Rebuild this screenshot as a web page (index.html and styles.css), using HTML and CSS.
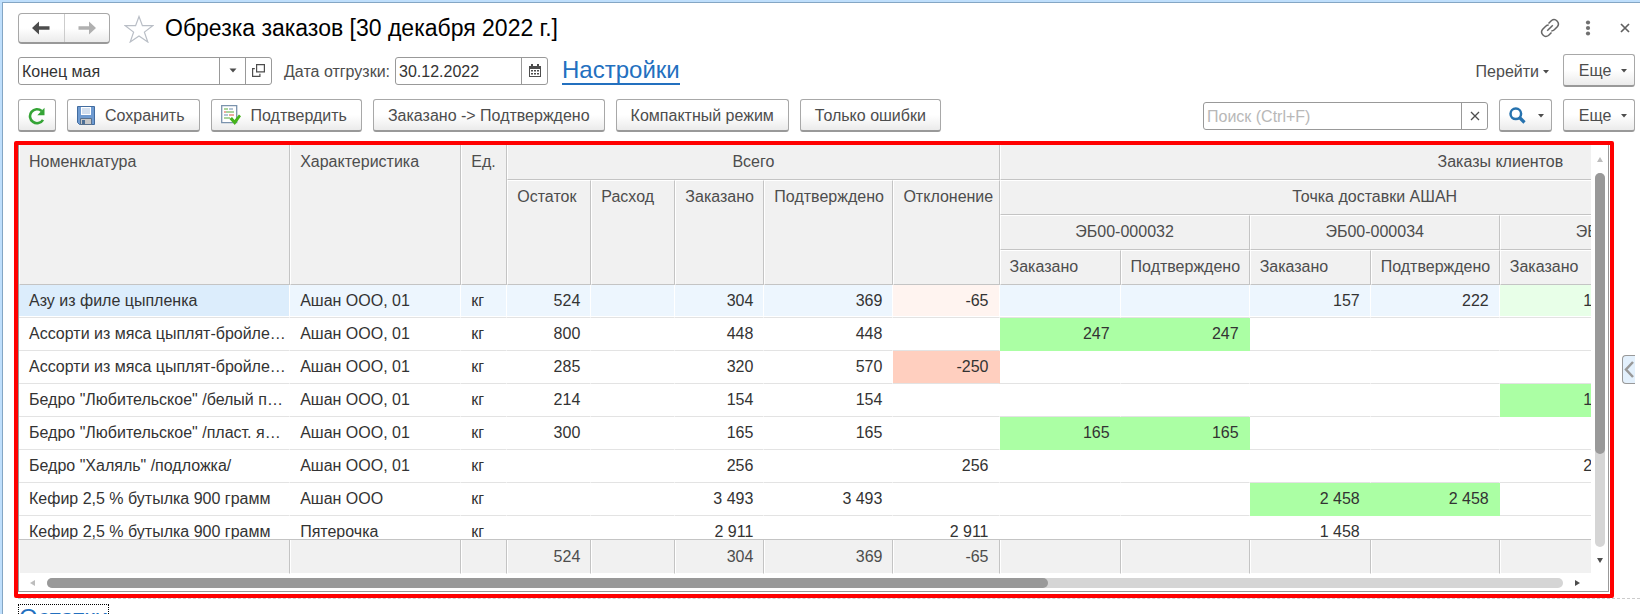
FILE: index.html
```html
<!DOCTYPE html>
<html lang="ru">
<head>
<meta charset="utf-8">
<title>Обрезка заказов</title>
<link rel="stylesheet" href="styles.css">
</head>
<body>
<div class="window">
  <header class="titlebar">
    <div class="history">
      <button class="history-btn" type="button" aria-label="Назад"><svg width="18" height="14" viewBox="0 0 18 14"><path d="M0 7l7-6.500v4.700h10.500v3.600H7v4.700z" fill="#4d4d4d"/></svg></button>
      <button class="history-btn" type="button" aria-label="Вперед"><svg width="18" height="14" viewBox="0 0 18 14"><path d="M18 7l-7-6.500v4.700H.500v3.600H11v4.700z" fill="#b0b0b0"/></svg></button>
    </div>
    <button class="plain star" type="button" aria-label="В избранное"><svg width="30" height="28" viewBox="0 0 30 28"><path d="M15 1.500l3.400 9.200h10.300l-8.300 6.400 3.400 9.900-8.800-6-8.800 6 3.400-9.900-8.300-6.400h10.300z" fill="none" stroke="#b9bec6" stroke-width="1.200"/></svg></button>
    <h1 class="title">Обрезка заказов [30 декабря 2022 г.]</h1>
    <div class="window-tools">
      <button class="plain" type="button" aria-label="Ссылка"><svg width="20" height="20" viewBox="0 0 20 20" fill="none" stroke="#666" stroke-width="1.500"><path d="M8.500 5.500l3-3a4.300 4.300 0 0 1 6 6l-3.200 3.200a4.300 4.300 0 0 1-3 1.200M11.500 14.500l-3 3a4.300 4.300 0 0 1-6-6l3.200-3.200a4.300 4.300 0 0 1 3-1.200M7.200 12.800l5.600-5.600"/></svg></button>
      <button class="plain" type="button" aria-label="Меню"><svg width="6" height="16" viewBox="0 0 6 16" fill="#707070"><circle cx="3" cy="2.500" r="2.100"/><circle cx="3" cy="8" r="2.100"/><circle cx="3" cy="13.500" r="2.100"/></svg></button>
      <button class="plain" type="button" aria-label="Закрыть"><svg width="10" height="10" viewBox="0 0 10 10"><path d="M1 1l8 8M9 1l-8 8" stroke="#606060" stroke-width="1.700"/></svg></button>
    </div>
  </header>

  <div class="params">
    <div class="field field-preset">
      <input type="text" value="Конец мая" aria-label="Настройка">
      <button type="button" aria-label="Выбрать"><svg width="8" height="5" viewBox="0 0 8 5"><path d="M.500.500h7L4 4.500z" fill="#4d4d4d"/></svg></button>
      <button type="button" aria-label="Открыть"><svg width="13" height="13" viewBox="0 0 13 13" fill="none" stroke="#4d4d4d" stroke-width="1.200"><path d="M4.600.600h7.800v7.300H4.600zM2.800 4.600H.600v7.800h7.300V9.800"/></svg></button>
    </div>
    <label class="caption" for="ship-date">Дата отгрузки:</label>
    <div class="field field-date">
      <input id="ship-date" type="text" value="30.12.2022">
      <button type="button" aria-label="Календарь"><svg width="12" height="13" viewBox="0 0 12 13"><path d="M0 2h12v11H0z" fill="#4d4d4d"/><path d="M2 0h2v3H2zM8 0h2v3H8z" fill="#4d4d4d"/><path d="M1 5h10v7H1z" fill="#fff"/><path d="M2 6h2v1.500H2zM5 6h2v1.500H5zM8 6h2v1.500H8zM2 9h2v1.500H2zM5 9h2v1.500H5zM8 9h2v1.500H8z" fill="#4d4d4d"/></svg></button>
    </div>
    <a class="big-link" href="#settings">Настройки</a>
    <button class="plain goto" type="button">Перейти <svg width="6" height="4" viewBox="0 0 6 4"><path d="M0 0h6L3 3.500z" fill="#4d4d4d"/></svg></button>
    <button class="btn btn-more" type="button">Еще <svg width="6" height="4" viewBox="0 0 6 4"><path d="M0 0h6L3 3.500z" fill="#4d4d4d"/></svg></button>
  </div>

  <div class="commands">
    <button class="btn btn-icon" type="button" aria-label="Обновить"><svg width="18" height="18" viewBox="0 0 18 18"><path d="M15 12.800A7 7 0 1 1 13.700 4" fill="none" stroke="#35a436" stroke-width="2.600"/><path d="M16.500.800v7.400H9.300z" fill="#35a436"/></svg></button>
    <button class="btn btn-pic" type="button"><svg width="18" height="19" viewBox="0 0 18 19"><path d="M.500.500h17v18H2.500l-2-2z" fill="#6f9bd1" stroke="#426c9f"/><path d="M4 1h10v8H4z" fill="#fff"/><path d="M5 3h8M5 5h8M5 7h8" stroke="#a7c0df"/><path d="M3.500 12.500h11v6h-11z" fill="#c8c8c8" stroke="#59718d"/><path d="M5 14h3v4H5z" fill="#4d6f96"/></svg>Сохранить</button>
    <button class="btn btn-pic" type="button"><svg width="20" height="21" viewBox="0 0 20 21"><path d="M.700.700h15v17h-15z" fill="#fff" stroke="#7b93ad" stroke-width="1.300"/><path d="M3 4h4M5 7h8M3 13h6" stroke="#56a83b"/><path d="M8 4h4M3 10h4" stroke="#6c8cab"/><path d="M3 7h2M8 10h5" stroke="#e0523f"/><path d="M8.500 14l2.500-2 2.500 3L18 9.500l2 1.800-6.200 8.700z" fill="#46b31c"/></svg>Подтвердить</button>
    <button class="btn" type="button">Заказано -&gt; Подтверждено</button>
    <button class="btn" type="button">Компактный режим</button>
    <button class="btn" type="button">Только ошибки</button>
    <div class="field field-search">
      <input type="text" placeholder="Поиск (Ctrl+F)" aria-label="Поиск">
      <button type="button" aria-label="Очистить"><svg width="10" height="10" viewBox="0 0 10 10"><path d="M1 1l8 8M9 1l-8 8" stroke="#4d4d4d" stroke-width="1.300"/></svg></button>
    </div>
    <button class="btn btn-find" type="button" aria-label="Найти"><svg width="17" height="17" viewBox="0 0 17 17" fill="none" stroke="#2672ae"><circle cx="6.800" cy="6.800" r="5.300" stroke-width="2.500"/><path d="M10.500 10.500l5 5" stroke-width="3.200"/></svg><svg width="6" height="4" viewBox="0 0 6 4"><path d="M0 0h6L3 3.500z" fill="#4d4d4d"/></svg></button>
    <button class="btn btn-more" type="button">Еще <svg width="6" height="4" viewBox="0 0 6 4"><path d="M0 0h6L3 3.500z" fill="#4d4d4d"/></svg></button>
  </div>

  <div class="work">
    <div class="highlight">
      <div class="grid-frame">
        <div class="grid-main">
          <div class="rows">
            <table class="grid">
              <colgroup><col class="w-name"><col class="w-char"><col class="w-unit"><col class="w-rest"><col class="w-rest"><col class="w-total"><col class="w-conf"><col class="w-diff"><col class="w-ord"><col class="w-conf"><col class="w-ord"><col class="w-conf"><col class="w-ord"><col class="w-conf"></colgroup>
              <thead>
                <tr><th rowspan="4">Номенклатура</th><th rowspan="4">Характеристика</th><th rowspan="4">Ед.</th><th class="mid" colspan="5">Всего</th><th class="clients" colspan="6">Заказы клиентов</th></tr>
                <tr><th rowspan="3">Остаток</th><th rowspan="3">Расход</th><th rowspan="3">Заказано</th><th rowspan="3">Подтверждено</th><th rowspan="3">Отклонение</th><th class="mid" colspan="6">Точка доставки АШАН</th></tr>
                <tr><th class="mid" colspan="2">ЭБ00-000032</th><th class="mid" colspan="2">ЭБ00-000034</th><th class="mid" colspan="2">ЭБ00-000035</th></tr>
                <tr><th>Заказано</th><th>Подтверждено</th><th>Заказано</th><th>Подтверждено</th><th>Заказано</th><th>Подтверждено</th></tr>
              </thead>
              <tbody>
                <tr class="current"><td class="active">Азу из филе цыпленка</td><td>Ашан ООО, 01</td><td>кг</td><td>524</td><td></td><td>304</td><td>369</td><td class="warn">-65</td><td></td><td></td><td>157</td><td>222</td><td class="ok">147</td><td class="ok"></td></tr>
                <tr><td>Ассорти из мяса цыплят-бройлеров</td><td>Ашан ООО, 01</td><td>кг</td><td>800</td><td></td><td>448</td><td>448</td><td></td><td class="ok">247</td><td class="ok">247</td><td></td><td></td><td></td><td></td></tr>
                <tr><td>Ассорти из мяса цыплят-бройлеров</td><td>Ашан ООО, 01</td><td>кг</td><td>285</td><td></td><td>320</td><td>570</td><td class="warn">-250</td><td></td><td></td><td></td><td></td><td></td><td></td></tr>
                <tr><td>Бедро "Любительское" /белый поднос/</td><td>Ашан ООО, 01</td><td>кг</td><td>214</td><td></td><td>154</td><td>154</td><td></td><td></td><td></td><td></td><td></td><td class="ok">154</td><td class="ok"></td></tr>
                <tr><td>Бедро "Любительское" /пласт. ящик/</td><td>Ашан ООО, 01</td><td>кг</td><td>300</td><td></td><td>165</td><td>165</td><td></td><td class="ok">165</td><td class="ok">165</td><td></td><td></td><td></td><td></td></tr>
                <tr><td>Бедро "Халяль" /подложка/</td><td>Ашан ООО, 01</td><td>кг</td><td></td><td></td><td>256</td><td></td><td>256</td><td></td><td></td><td></td><td></td><td>256</td><td></td></tr>
                <tr><td>Кефир 2,5 % бутылка 900 грамм</td><td>Ашан ООО</td><td>кг</td><td></td><td></td><td>3 493</td><td>3 493</td><td></td><td></td><td></td><td class="ok">2 458</td><td class="ok">2 458</td><td></td><td></td></tr>
                <tr><td>Кефир 2,5 % бутылка 900 грамм</td><td>Пятерочка</td><td>кг</td><td></td><td></td><td>2 911</td><td></td><td>2 911</td><td></td><td></td><td>1 458</td><td></td><td></td><td></td></tr>
              </tbody>
            </table>
          </div>
          <div class="totals">
            <table class="grid">
              <colgroup><col class="w-name"><col class="w-char"><col class="w-unit"><col class="w-rest"><col class="w-rest"><col class="w-total"><col class="w-conf"><col class="w-diff"><col class="w-ord"><col class="w-conf"><col class="w-ord"><col class="w-conf"><col class="w-ord"><col class="w-conf"></colgroup>
              <tfoot><tr><td></td><td></td><td></td><td>524</td><td></td><td>304</td><td>369</td><td>-65</td><td></td><td></td><td></td><td></td><td></td><td></td></tr></tfoot>
            </table>
          </div>
        </div>
        <div class="vscroll">
          <svg width="6" height="5" viewBox="0 0 6 5"><path d="M3 0l3 5H0z" fill="#bdbdbd"/></svg>
          <div class="track"><div class="thumb"></div></div>
          <svg width="6" height="5" viewBox="0 0 6 5"><path d="M3 5l3-5H0z" fill="#4d4d4d"/></svg>
        </div>
        <div class="hscroll">
          <svg width="5" height="6" viewBox="0 0 5 6"><path d="M0 3l5-3v6z" fill="#bdbdbd"/></svg>
          <div class="track"><div class="thumb"></div></div>
          <svg width="5" height="6" viewBox="0 0 5 6"><path d="M5 3L0 0v6z" fill="#4d4d4d"/></svg>
        </div>
      </div>
    </div>
    <button class="side-tab" type="button" aria-label="Развернуть"><svg width="10" height="17" viewBox="0 0 10 17"><path d="M9 1L2 8.500 9 16" fill="none" stroke="#999" stroke-width="2.500"/></svg></button>
  </div>
  <div class="below"><a class="big-link focused" href="#rest">Остатки</a></div>
</div>
</body>
</html>
```
FILE: styles.css
```css
* { box-sizing: border-box; }

html, body { height: 100%; }

body {
  margin: 0;
  overflow: hidden;
  background: #fff;
  color: #4d4d4d;
  font: 16px/20px "Liberation Sans", Arial, sans-serif;
}

.window {
  min-height: 100%;
  padding: 10px 5px 0 15px;
  border-top: 1px solid #84a6c4;
  border-left: 1px solid #84a6c4;
  box-shadow: 0 0 0 2px #bfdffc;
  margin: 2px 0 0 2px;
}

button, input { font: inherit; color: inherit; }
button { padding: 0; cursor: pointer; }
svg { display: block; flex: none; }

.plain { border: 0; background: none; display: flex; align-items: center; }

.titlebar { display: flex; align-items: center; height: 31px; }

.history {
  display: flex;
  width: 92px;
  height: 31px;
  border: 1px solid #a8a8a8;
  border-bottom: 2px solid #999;
  border-radius: 4px;
  background: linear-gradient(#fff 50%, #ebebeb);
}
.history-btn {
  flex: 1;
  display: flex;
  align-items: center;
  justify-content: center;
  border: 0;
  background: none;
}
.history-btn + .history-btn { border-left: 1px solid #ccc; }

.star { margin-left: 14px; }

.title {
  margin: 0 0 2px 11px;
  color: #000;
  font-size: 23px;
  line-height: 28px;
  font-weight: 400;
}

.window-tools { display: flex; align-items: center; gap: 25px; margin: 0 5px 2px auto; }
.window-tools .plain:last-child { margin-left: 4px; }

.params, .commands { display: flex; align-items: center; height: 33px; }
.params { margin-top: 10px; }
.commands { margin-top: 12px; gap: 11px; }

.field {
  display: flex;
  height: 28px;
  border: 1px solid #999;
  border-radius: 3px;
  background: #fff;
}
.field input {
  flex: 1;
  min-width: 0;
  padding: 2px 3px 0;
  border: 0;
  outline: 0;
  background: none;
  color: #333;
}
.field input::placeholder { color: #b8b8b8; opacity: 1; }
.field button {
  display: flex;
  align-items: center;
  justify-content: center;
  width: 26px;
  border: 0;
  border-left: 1px solid #999;
  background: none;
}
.field-preset { width: 254px; }
.field-date { width: 153px; }
.field-search { width: 285px; margin-left: auto; }

.caption { margin: 0 5px 0 12px; padding-top: 2px; }

.big-link { color: #2370bf; font-size: 24px; line-height: 26px; text-decoration: none; }
.params .big-link { margin-left: 14px; border-bottom: 2px solid #2370bf; }

.goto { gap: 4px; margin-left: auto; padding-top: 2px; }
.params .btn-more { margin-left: 14px; }

.btn {
  display: flex;
  align-items: center;
  justify-content: center;
  height: 33px;
  padding: 1px 14px 0;
  border: 1px solid #a8a8a8;
  border-bottom: 2px solid #999;
  border-radius: 3px;
  background: linear-gradient(#fff 50%, #ebebeb);
  white-space: nowrap;
}
.btn-icon { width: 38px; padding: 1px 0 0; }
.btn-pic { gap: 10px; padding: 1px 14px 0 9px; }
.btn-more { width: 72px; gap: 10px; padding: 1px 8px 0 16px; }
.btn-find { width: 53px; gap: 12px; padding: 1px 8px 0 10px; }

.work { display: flex; align-items: center; justify-content: space-between; margin: 9px 0 0 -4px; }

.highlight {
  flex: 1;
  min-width: 0;
  border: 4px solid #f00;
  border-radius: 2px;
}

.grid-frame {
  display: grid;
  grid-template-columns: minmax(0, 1fr) 17px;
  margin: 0 1px 2px 0;
  border: 1px solid #999;
  border-top: 0;
}

.grid-main { min-width: 0; }
.rows { height: 394px; overflow: hidden; }
.totals { overflow: hidden; border-top: 1px solid #c4c4c4; }

.grid {
  width: 1731px;
  min-width: 100%;
  table-layout: fixed;
  border-collapse: separate;
  border-spacing: 0;
}
.w-name { width: 271px; }
.w-char { width: 171px; }
.w-unit { width: 46px; }
.w-rest { width: 84px; }
.w-total { width: 89px; }
.w-conf { width: 129px; }
.w-diff { width: 106px; }
.w-ord { width: 121px; }

.grid th {
  height: 35px;
  padding: 6px 0 7px 9px;
  border: 1px solid #fff;
  border-right-color: #c4c4c4;
  border-bottom-color: #c4c4c4;
  background: #f1f1f1;
  font-weight: 400;
  text-align: left;
  vertical-align: top;
  white-space: nowrap;
}
.grid thead tr:first-child th { border-top: 0; padding-top: 7px; }
.grid th.mid { padding-left: 0; text-align: center; }
.grid th.clients { padding-left: 437px; }

.grid td {
  height: 33px;
  padding: 0 10px;
  border-right: 1px solid transparent;
  border-bottom: 1px solid #e3e3e3;
  color: #333;
  text-align: right;
  overflow: hidden;
  white-space: nowrap;
  text-overflow: ellipsis;
}
.grid td:nth-child(-n+3) { text-align: left; }
.grid td:first-child { padding-right: 2px; }

.grid .ok { background: #abffa4; border-right-color: #abffa4; border-bottom-color: #abffa4; }
.grid .warn { background: #ffcfbf; border-right-color: #ffcfbf; }

.grid .current td { background: #edf6fe; border-right-color: #fff; border-bottom-color: #e3e3e3; box-shadow: inset 0 -1px #fff; }
.grid .current .active { background: #dcedfc; }
.grid .current .ok { background: #e8ffe8; }
.grid .current .warn { background: #fff4f0; }

.grid tfoot td {
  height: 34px;
  border: 1px solid #fff;
  border-top: 0;
  border-right-color: #c4c4c4;
  background: #f1f1f1;
  color: #4d4d4d;
}

.track { flex: 1; border-radius: 5px; background: #d5d5d5; }
.thumb { border-radius: 5px; background: #999; }

.vscroll { display: flex; flex-direction: column; align-items: center; padding: 12px 0 11px; gap: 11px; }
.vscroll .track { width: 10px; }
.vscroll .thumb { height: 75%; }

.hscroll { grid-column: 1 / -1; display: flex; align-items: center; gap: 12px; height: 17px; padding: 0 28px 0 11px; }
.hscroll .track { height: 10px; }
.hscroll .thumb { width: 66%; height: 10px; }

.side-tab {
  display: flex;
  align-items: center;
  justify-content: center;
  width: 13px;
  height: 29px;
  margin-left: 8px;
  border: 1px solid #999;
  border-right: 0;
  border-radius: 4px 0 0 4px;
  background: #e3f0fc;
}

.below { margin-right: -5px; padding-top: 5px; border-top: 1px dashed #ccc; }
.focused { display: inline-block; border: 1px dotted #000; text-decoration: underline; }
```
